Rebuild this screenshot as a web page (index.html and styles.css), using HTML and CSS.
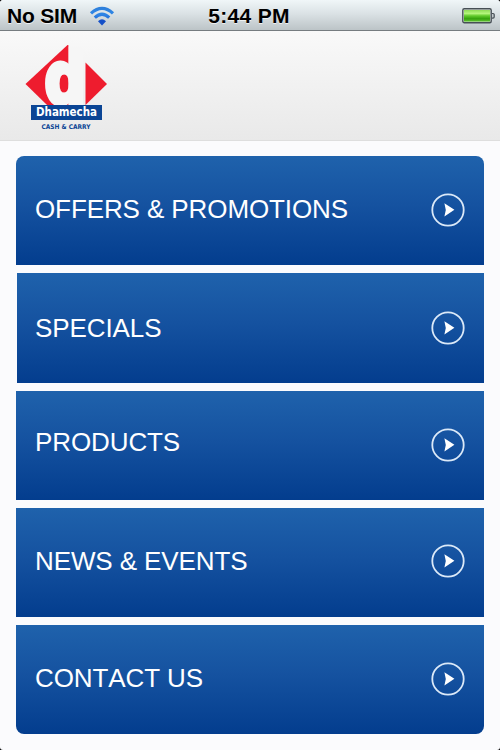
FILE: index.html
```html
<!DOCTYPE html>
<html lang="en">
<head>
  <meta charset="UTF-8" />
  <meta name="viewport" content="width=device-width, initial-scale=1.0"/>
  <title>Dhamecha Cash &amp; Carry</title>
  <link rel="stylesheet" href="styles.css">
</head>
<body>

  <div class="status-bar">
    <div class="carrier">
      <span class="no-sim">No SIM</span>
      <svg class="wifi" width="26" height="20" viewBox="0 0 26 20">
        <defs>
          <linearGradient id="wifiFill" x1="0" y1="0" x2="0" y2="20" gradientUnits="userSpaceOnUse">
            <stop offset="0" stop-color="#2f7fd8"/>
            <stop offset="0.4" stop-color="#2f86e6"/>
            <stop offset="1" stop-color="#1550c8"/>
          </linearGradient>
        </defs>
        <g fill="none" stroke="url(#wifiFill)" stroke-width="3.2">
          <path d="M2 7.4 Q13 -2.6 24 7.4"/>
          <path d="M5.8 11.6 Q13 4.8 20.2 11.6"/>
        </g>
        <path d="M9 15.2 Q13 11.4 17 15.2 L13 19.4 Z" fill="#1550c8"/>
      </svg>
    </div>
    <span class="time">5:44 PM</span>
    <svg class="battery" width="33" height="18" viewBox="0 0 33 18">
      <defs>
        <linearGradient id="charge" x1="0" y1="0" x2="0" y2="1">
          <stop offset="0" stop-color="#8fdc55"/>
          <stop offset="0.3" stop-color="#b4f57c"/>
          <stop offset="0.5" stop-color="#62cb2c"/>
          <stop offset="0.75" stop-color="#35a20c"/>
          <stop offset="1" stop-color="#63c435"/>
        </linearGradient>
      </defs>
      <rect x="0.8" y="1.8" width="28.4" height="14" rx="1.5" fill="#e4ece4" stroke="#474f55" stroke-width="1.4"/>
      <rect x="2" y="3" width="26" height="11.6" fill="url(#charge)"/>
      <path d="M30 6.5 h1 q1.2 0 1.2 1 v2.6 q0 1 -1.2 1 h-1" fill="#c3cacd" stroke="#474f55" stroke-width="1.2"/>
    </svg>
  </div>

  <div class="header">
    <svg class="logo" width="84" height="88" viewBox="24 44 84 88">
      <path d="M25.5 84 L67.5 45 Q68.5 44.5 68.5 46 V105 H47 Z" fill="#ee1c2e"/>
      <path d="M85.5 62.5 L107 84 L85.5 105 Z" fill="#ee1c2e"/>
      <text class="logo-letter" transform="translate(44.6 103) scale(0.81 1)">d</text>
      <rect x="31" y="105" width="71" height="15" fill="#0b4595"/>
      <text class="logo-name" x="36" y="116" textLength="61" lengthAdjust="spacingAndGlyphs">Dhamecha</text>
      <text class="logo-sub" x="41.5" y="128.6" textLength="49" lengthAdjust="spacingAndGlyphs">CASH &amp; CARRY</text>
    </svg>
  </div>

  <div class="menu">
    <a class="item offers">
      <span>OFFERS &amp; PROMOTIONS</span>
      <svg class="arrow" viewBox="0 0 34 34"><circle cx="17" cy="17" r="15.7"/><path d="M13.4 10.2 L23.4 16.8 L13.4 23.6 L14.8 17 Z"/></svg>
    </a>
    <a class="item specials">
      <span>SPECIALS</span>
      <svg class="arrow" viewBox="0 0 34 34"><circle cx="17" cy="17" r="15.7"/><path d="M13.4 10.2 L23.4 16.8 L13.4 23.6 L14.8 17 Z"/></svg>
    </a>
    <a class="item products">
      <span>PRODUCTS</span>
      <svg class="arrow" viewBox="0 0 34 34"><circle cx="17" cy="17" r="15.7"/><path d="M13.4 10.2 L23.4 16.8 L13.4 23.6 L14.8 17 Z"/></svg>
    </a>
    <a class="item news">
      <span>NEWS &amp; EVENTS</span>
      <svg class="arrow" viewBox="0 0 34 34"><circle cx="17" cy="17" r="15.7"/><path d="M13.4 10.2 L23.4 16.8 L13.4 23.6 L14.8 17 Z"/></svg>
    </a>
    <a class="item contact">
      <span>CONTACT US</span>
      <svg class="arrow" viewBox="0 0 34 34"><circle cx="17" cy="17" r="15.7"/><path d="M13.4 10.2 L23.4 16.8 L13.4 23.6 L14.8 17 Z"/></svg>
    </a>
  </div>

</body>
</html>
```

FILE: styles.css
```css
* {
  box-sizing: border-box;
}

html {
  background-color: #000;
}

body {
  margin: 0;
  padding: 0;
  height: 750px;
  overflow: hidden;
  background-color: #fbfbfd;
  border-radius: 3px;
  font-family: "Liberation Sans", Arial, sans-serif;
}

.status-bar {
  display: grid;
  grid-template-columns: 1fr auto 1fr;
  align-items: center;
  height: 31px;
  padding: 1px 5px 0 7px;
  background: linear-gradient(#f0f6f8, #dbe2e5 45%, #bcc4c7);
  border-bottom: 1px solid #767c80;
  border-radius: 3px 3px 0 0;
  color: #000;
  font-size: 21px;
  font-weight: bold;
  text-shadow: 0 1px 0 rgba(255, 255, 255, 0.7);
}

.carrier {
  display: flex;
  align-items: center;
  gap: 12px;
}

.no-sim {
  letter-spacing: -0.2px;
}

.time {
  margin-right: 4px;
  letter-spacing: 0.3px;
}

.battery {
  justify-self: end;
}

.header {
  height: 110px;
  padding: 13px 24px;
  background: linear-gradient(#f9f9f9, #e9e9e9);
  border-bottom: 1px solid #dedede;
}

.logo {
  display: block;
  overflow: visible;
}

.logo-letter {
  font-family: "DejaVu Sans", sans-serif;
  font-size: 71px;
  font-weight: bold;
  fill: #f6f6f6;
  stroke: #f6f6f6;
  stroke-width: 5px;
}

.logo-name {
  font-family: "DejaVu Sans", sans-serif;
  font-size: 11.5px;
  font-weight: bold;
  fill: #fff;
}

.logo-sub {
  font-family: "DejaVu Sans", sans-serif;
  font-size: 6.4px;
  font-weight: bold;
  fill: #0b4595;
}

.menu {
  display: flex;
  flex-direction: column;
  gap: 8px;
  padding: 15px 16px 0;
}

.item {
  display: flex;
  justify-content: space-between;
  align-items: center;
  height: 109.25px;
  padding: 0 19px;
  background: linear-gradient(#1f62ac, #1552a0 45%, #033d8e);
  color: #fff;
  font-size: 26px;
  font-kerning: none;
  letter-spacing: -0.1px;
}

.offers {
  padding-bottom: 2px;
  border-radius: 8px 8px 0 0;
}

.specials {
  margin-left: 1px;
  padding-left: 18px;
}

.specials span {
  padding-top: 2px;
}

.products span {
  padding-bottom: 6px;
}

.news {
  padding-bottom: 2px;
}

.contact {
  padding-bottom: 2px;
  border-radius: 0 0 8px 8px;
}

.arrow {
  width: 34px;
  height: 34px;
}

.arrow circle {
  fill: none;
  stroke: #dbe9f8;
  stroke-width: 1.8;
}

.arrow path {
  fill: #fff;
}
```
